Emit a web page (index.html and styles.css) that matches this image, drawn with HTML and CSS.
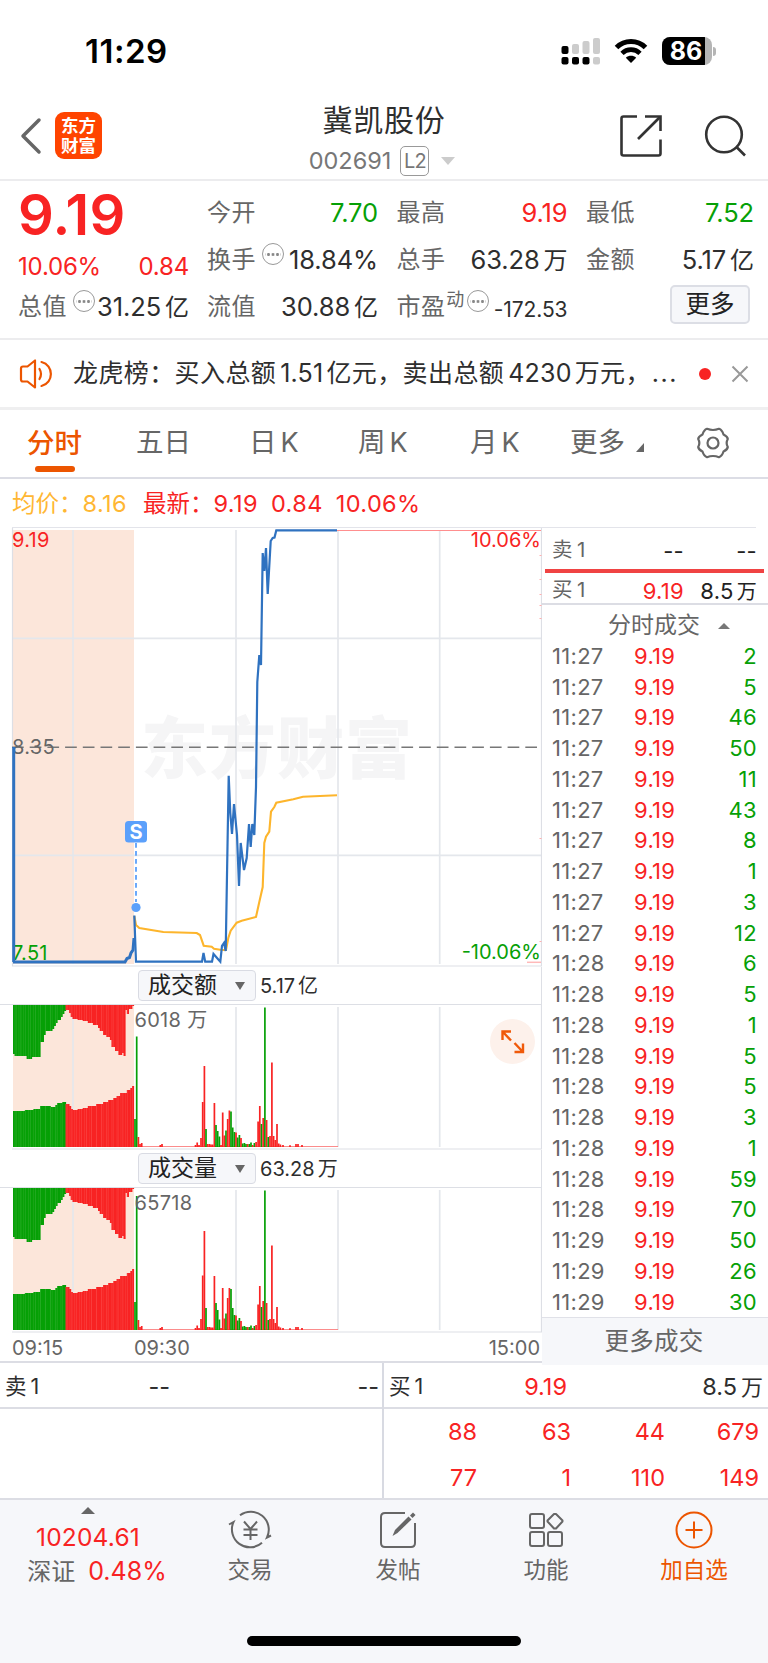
FILE: index.html
```html
<!DOCTYPE html>
<html lang="zh-CN">

<head>
    <meta charset="UTF-8">
    <meta name="viewport" content="width=device-width, initial-scale=1.0">
    <title>冀凯股份 002691</title>
    <link rel="stylesheet" href="styles.css">
</head>

<body>

    <div class="status-bar">
        <span class="clock">11:29</span>
        <svg class="signal" width="40" height="28" viewBox="0 0 40 28">
            <g fill="#000">
                <rect x="0.5" y="9" width="7" height="8" rx="2" />
                <rect x="0.5" y="20" width="7" height="7.5" rx="2" />
                <rect x="11" y="20" width="7" height="7.5" rx="2" />
                <rect x="21.5" y="20" width="7" height="7.5" rx="2" />
            </g>
            <g fill="#ccc">
                <rect x="11" y="7" width="7" height="10" rx="2" />
                <rect x="21.5" y="4" width="7" height="13" rx="2" />
                <rect x="32" y="1" width="7" height="16" rx="2" />
                <rect x="32" y="20" width="7" height="7.5" rx="2" />
            </g>
        </svg>
        <svg class="wifi" width="34" height="26" viewBox="0 0 34 26">
            <path d="M2.5 9.5C10.500 1.500 23.500 1.500 31.500 9.500" fill="none" stroke="#000" stroke-width="5" />
            <path d="M8 15.300C13 10.400 21 10.400 26 15.300" fill="none" stroke="#000" stroke-width="4.600" />
            <path d="M17 25L11.800 19.800C14.700 17.200 19.300 17.200 22.200 19.800Z" fill="#000" />
        </svg>
        <span class="battery"><span class="battery-level">86</span></span>
        <span class="battery-cap"></span>
    </div>

    <header class="header">
        <svg class="back" width="22" height="38" viewBox="0 0 22 38">
            <path d="M19 3L3 19L19 35" fill="none" stroke="#666" stroke-width="3.500" stroke-linecap="round" stroke-linejoin="round" />
        </svg>
        <div class="logo"><span>东方</span><span>财富</span></div>
        <div class="title">
            <h1>冀凯股份</h1>
            <div class="code">002691 <span class="level">L2</span><i class="tri-down"></i></div>
        </div>
        <svg class="share" width="44" height="44" viewBox="0 0 44 44" fill="none" stroke="#333" stroke-width="2.600">
            <path d="M18 2.500H4.500Q2.500 2.500 2.500 4.500V39.500Q2.500 41.500 4.500 41.500H39.500Q41.500 41.500 41.500 39.500V25.500" />
            <path d="M26 2.500H41.500V17" />
            <path d="M41 3L19 25" />
        </svg>
        <svg class="search" width="44" height="44" viewBox="0 0 44 44" fill="none" stroke="#333" stroke-width="2.600">
            <circle cx="20" cy="20.500" r="17.800" />
            <path d="M32 32.500L41 41.500" />
        </svg>
    </header>

    <section class="quote">
        <div class="price">
            <div class="price-now">9.19</div>
            <div class="price-change"><span>10.06%</span><span>0.84</span></div>
            <div class="cell"><span class="label">总值</span><i class="tip"></i><span class="num">31.25<b>亿</b></span></div>
        </div>
        <div class="stats">
            <div class="cell"><span class="label">今开</span><span class="num green">7.70</span></div>
            <div class="cell"><span class="label">最高</span><span class="num red">9.19</span></div>
            <div class="cell"><span class="label">最低</span><span class="num green">7.52</span></div>
            <div class="cell"><span class="label">换手</span><i class="tip"></i><span class="num">18.84%</span></div>
            <div class="cell"><span class="label">总手</span><span class="num">63.28<b>万</b></span></div>
            <div class="cell"><span class="label">金额</span><span class="num">5.17<b>亿</b></span></div>
            <div class="cell"><span class="label">流值</span><span class="num">30.88<b>亿</b></span></div>
            <div class="cell"><span class="label">市盈</span><sup>动</sup><i class="tip"></i><span class="num small">-172.53</span></div>
            <div class="cell"><button class="more-btn">更多</button></div>
        </div>
    </section>

    <section class="notice">
        <svg width="34" height="30" viewBox="0 0 34 30" fill="none" stroke="#ec5500" stroke-width="2.200" stroke-linejoin="round" stroke-linecap="round">
            <path d="M8.500 7.500L16 1.500V28.500L8.500 22.500H4Q2 22.500 2 20.500V9.500Q2 7.500 4 7.500Z" />
            <path d="M20.500 10Q23.500 15 20.500 20" />
            <path d="M22.500 3C35 6 35 24 22.500 27" />
        </svg>
        <p>龙虎榜：买入总额<em>1.51</em>亿元，卖出总额<em>4230</em>万元，<span class="dots">...</span></p>
        <i class="red-dot"></i>
        <svg width="18" height="18" viewBox="0 0 18 18" stroke="#999" stroke-width="2"><path d="M1.500 1.500L16.500 16.500M16.500 1.500L1.500 16.500" /></svg>
    </section>

    <nav class="tabs">
        <span class="tab active">分时</span>
        <span class="tab">五日</span>
        <span class="tab">日<em>K</em></span>
        <span class="tab">周<em>K</em></span>
        <span class="tab">月<em>K</em></span>
        <span class="tab">更多<i class="corner"></i></span>
        <svg class="gear" width="34" height="34" viewBox="0 0 34 34" fill="none" stroke="#666" stroke-width="2.200" stroke-linejoin="round">
            <path d="M11 2.800Q17 5.200 23 2.800Q26 3.800 27.500 8.500Q31.500 10.500 31.800 13Q29.500 17 31.800 21Q31.500 23.500 27.500 25.500Q26 30.200 23 31.200Q17 28.800 11 31.200Q8 30.200 6.500 25.500Q2.500 23.500 2.200 21Q4.500 17 2.200 13Q2.500 10.500 6.500 8.500Q8 3.800 11 2.800Z" />
            <circle cx="17" cy="17" r="5.500" />
        </svg>
    </nav>

    <div class="legend">
        <span class="avg">均价：<em>8.16</em></span>
        <span class="last">最新：<em>9.19</em></span>
        <span class="last"><em>0.84</em></span>
        <span class="last"><em>10.06%</em></span>
    </div>

    <main class="market">
        <div class="charts">
            <!-- price line -->
            <svg class="chart" width="542" height="439" viewBox="0 528 542 439">
                <rect x="13" y="530" width="121" height="434" fill="#fce6da" />
                <text class="watermark" x="141" y="773">东方财富</text>
                <g class="grid">
                    <path d="M73 530V964M236 530V964M338 530V964M439.700 530V964" />
                    <path d="M12 638.300H541M12 855.300H541" />
                    <path class="frame" d="M12.500 527V966H541.500V527" />
                </g>
                <path d="M276 530.500H541" stroke="#ff8f8f" />
                <path d="M527 962.300H541" stroke="#ffb9b9" stroke-width="1.500" />
                <path d="M540.500 555v1M540.500 579v1M540.500 594v1M540.500 605v1M540.500 618v1M540.500 838v1M540.500 941v1" stroke="#ffb0b0" stroke-width="2" />
                <path d="M12 747.300H541" stroke="#777" stroke-width="1.400" stroke-dasharray="11.700 6" />
                <text class="mark red" x="12" y="547">9.19</text>
                <text class="mark" x="12" y="753.500">8.35</text>
                <text class="mark green" x="12" y="959.500">7.51</text>
                <text class="mark red end" x="541" y="547">10.06%</text>
                <text class="mark green end" x="541" y="959">-10.06%</text>
                <polyline id="avg-line" class="avg-line" />
                <path class="auction" d="M13.700 747V962M13 962H125L127 958.500L129.500 957.500L131 953L133 950L134 938" />
                <polyline id="price-line" class="price-line" />
                <path d="M136 843V902" stroke="#5ba0fb" stroke-width="1.800" stroke-dasharray="4.800 3.200" />
                <circle cx="136" cy="907.500" r="4.600" fill="#5ba0fb" />
                <rect x="125" y="821" width="22" height="21.500" rx="3.500" fill="#5ba0fb" />
                <text class="sell" x="136" y="839">S</text>
            </svg>

            <div class="sub-head">
                <span class="picker">成交额<i></i></span><span class="total">5.17<b>亿</b></span>
            </div>
            <svg class="chart" width="542" height="145" viewBox="0 0 542 145">
                <rect x="13" y="0" width="121" height="142" fill="#fce6da" />
                <path class="grid" d="M73 2V142M236 2V142M338 2V142M439.700 2V142" />
                <g id="amount-bars"></g>
                <text class="mark" x="134.500" y="22">6018 万</text>
                <path class="frame" d="M12 144H541.500V0" />
                <circle cx="512.500" cy="36.500" r="22.500" fill="#fdf1eb" />
                <path d="M502.500 35V26.500H511M503 27L511 35.500M523 38.500V47H514.500M522.500 46.500L514.500 38" fill="none" stroke="#f05a0a" stroke-width="2.400" />
            </svg>

            <div class="sub-head">
                <span class="picker">成交量<i></i></span><span class="total">63.28<b>万</b></span>
            </div>
            <svg class="chart" width="542" height="145" viewBox="0 0 542 145">
                <rect x="13" y="0" width="121" height="142" fill="#fce6da" />
                <path class="grid" d="M73 2V142M236 2V142M338 2V142M439.700 2V142" />
                <g id="volume-bars"></g>
                <text class="mark" x="134.500" y="21.500">65718</text>
                <path class="frame" d="M12 144H541.500V0" />
            </svg>
            <div class="times"><span>09:15</span><span>09:30</span><span>15:00</span></div>
        </div>

        <aside class="ticks">
            <div class="order"><span class="label">卖<em>1</em></span><span class="dash">--</span><span class="dash">--</span></div>
            <div class="ratio"></div>
            <div class="order buy"><span class="label">买<em>1</em></span><span class="red">9.19</span><span>8.5<b>万</b></span></div>
            <div class="ticks-title">分时成交<i></i></div>
            <ul id="tick-list" class="tick-list"></ul>
            <div class="ticks-more">更多成交</div>
        </aside>
    </main>

    <section class="queue">
        <div class="side sell-side">
            <div class="best"><span>卖<em>1</em></span><span>--</span><span>--</span></div>
        </div>
        <div class="side">
            <div class="best"><span>买<em>1</em></span><span class="red">9.19</span><span>8.5<b>万</b></span></div>
            <div class="lots">
                <span>88</span><span>63</span><span>44</span><span>679</span>
                <span>77</span><span>1</span><span>110</span><span>149</span>
            </div>
        </div>
    </section>

    <footer class="footer">
        <div class="index">
            <i class="tri-up"></i>
            <div class="index-value">10204.61</div>
            <div class="index-name">深证<em>0.48%</em></div>
        </div>
        <div class="action">
            <svg width="44" height="40" viewBox="0 0 44 40" fill="none" stroke="#666" stroke-width="2">
                <path d="M12 5.300A18 18 0 0 1 39 27.500L43 25.500" />
                <path d="M34 32.700A18 18 0 0 1 5.500 12L1 14.500" />
                <path d="M16 11.500L22.500 19L29 11.500M22.500 19V30M15.500 19.500H29.500M15.500 25H29.500" />
            </svg>
            <span>交易</span>
        </div>
        <div class="action">
            <svg width="40" height="40" viewBox="0 0 40 40" fill="none" stroke="#666" stroke-width="2">
                <path d="M27 3H7Q3 3 3 7V33Q3 37 7 37H33Q37 37 37 33V13" />
                <path d="M14.500 26L17 20L30.500 6.500L33.500 9.500L19.500 23Z" fill="#666" stroke="none" />
                <path d="M32 5.500L35 2.500L37.500 5L34.500 8Z" fill="#666" stroke="none" />
            </svg>
            <span>发帖</span>
        </div>
        <div class="action">
            <svg width="40" height="40" viewBox="0 0 40 40" fill="none" stroke="#666" stroke-width="2">
                <rect x="4" y="4" width="14" height="14" rx="2" />
                <rect x="4" y="22" width="14" height="14" rx="2" />
                <rect x="22" y="22" width="14" height="14" rx="2" />
                <path d="M28 4L30 4L36.500 10.500V11.500L30 18.500H28L21.500 11.500V10.500Z" stroke-linejoin="round" />
            </svg>
            <span>功能</span>
        </div>
        <div class="action add">
            <svg width="40" height="40" viewBox="0 0 40 40" fill="none" stroke="#ec5500" stroke-width="2">
                <circle cx="20" cy="20" r="17.500" />
                <path d="M20 11.500V28.500M11.500 20H28.500" />
            </svg>
            <span>加自选</span>
        </div>
    </footer>
    <div class="home-bar"></div>

    <script src="script.js"></script>
</body>

</html>
```

FILE: styles.css
```css
* {
    box-sizing: border-box;
}

body {
    margin: 0;
    width: 768px;
    height: 1663px;
    overflow: hidden;
    background-color: #fff;
    color: #2e2e2e;
    font-family: Inter, "Noto Sans CJK SC", sans-serif;
    font-size: 24px;
    line-height: 1;
    white-space: nowrap;
}

i,
em,
b {
    font-style: normal;
    font-weight: normal;
}

.red {
    color: #f82323;
}

.green {
    color: #06a006;
}

/* status bar */
.status-bar {
    display: flex;
    align-items: center;
    height: 102px;
    padding-left: 85px;
}

.clock {
    width: 476px;
    padding-top: 1px;
    font-size: 33px;
    font-weight: 600;
    color: #000;
    letter-spacing: 0.5px;
}

.wifi {
    margin-left: 13px;
}

.battery {
    width: 50px;
    height: 28px;
    margin-left: 14px;
    border-radius: 8px;
    background-color: #b5b5b5;
    overflow: hidden;
}

.battery-level {
    display: block;
    width: 43px;
    padding-left: 5px;
    background-color: #000;
    color: #fff;
    font-size: 25px;
    font-weight: 700;
    line-height: 28px;
    text-align: center;
}

.battery-cap {
    width: 3px;
    height: 9px;
    margin-left: 1px;
    border-radius: 0 4px 4px 0;
    background-color: #b5b5b5;
}

/* header */
.header {
    display: flex;
    align-items: center;
    height: 79px;
    padding-left: 20px;
    padding-bottom: 12px;
    border-bottom: 2px solid #ececee;
}

.back {
    margin-top: 2px;
}

.logo {
    display: flex;
    flex-direction: column;
    align-items: center;
    justify-content: center;
    width: 47px;
    height: 47px;
    margin: 2px 0 0 13px;
    border-radius: 9px;
    background-color: #ff4400;
    color: #fff;
    font-size: 17.5px;
    font-weight: 700;
    line-height: 20px;
}

.title {
    width: 300px;
    margin: 8px 0 0 132px;
    text-align: center;
}

h1 {
    margin: 0;
    font-size: 30px;
    font-weight: 400;
    line-height: 36px;
    letter-spacing: 0.8px;
}

.code {
    display: flex;
    align-items: center;
    justify-content: center;
    height: 30px;
    margin-top: 8px;
    padding-right: 4px;
    color: #777;
    font-size: 23.500px;
}

.level {
    width: 29px;
    height: 30px;
    margin: 0 12px 0 9px;
    border: 1.5px solid #999;
    border-radius: 5px;
    font-size: 20px;
    line-height: 28px;
    letter-spacing: -1px;
}

.tri-down {
    border: 7px solid transparent;
    border-top: 8px solid #ccc;
    border-bottom: 0;
}

.share {
    margin: 2px 0 0 85px;
}

.search {
    margin: 2px 0 0 41px;
}

/* quote */
.quote {
    display: flex;
    height: 159px;
    padding: 8px 0 0 18px;
    border-bottom: 2px solid #ececee;
}

.price {
    width: 171px;
    margin-right: 18px;
    color: #f82323;
}

.price-now {
    height: 54px;
    font-size: 56px;
    font-weight: 600;
    line-height: 53px;
    letter-spacing: 0.2px;
}

.price-change {
    display: flex;
    justify-content: space-between;
    align-items: center;
    height: 40px;
    padding-top: 7px;
    letter-spacing: -0.2px;
}

.stats {
    display: grid;
    grid-template-columns: 171px 171px 168px;
    grid-auto-rows: 47px;
    column-gap: 18.500px;
}

.cell {
    display: flex;
    align-items: center;
    height: 47px;
    color: #2e2e2e;
}

.label {
    color: #666;
    font-size: 24px;
    letter-spacing: 0.4px;
}

.num {
    margin-left: auto;
    font-size: 25.5px;
    letter-spacing: -0.1px;
}

.num b {
    margin-left: 4px;
    font-size: 24px;
}

.num.green {
    color: #06a006;
}

.num.red {
    color: #f82323;
}

.num.small {
    font-size: 21px;
    padding-top: 6px;
}

.tip {
    flex: none;
    width: 22px;
    height: 22px;
    margin: 0 -6px 11px 6px;
    border: 1.8px solid #999;
    border-radius: 50%;
    background: radial-gradient(circle, #888 1.2px, transparent 1.7px) center / 4.500px 5px repeat-x content-box;
    padding: 0 2px;
}

sup {
    margin: 0 -3px 14px 1px;
    color: #666;
    font-size: 18px;
    line-height: 1;
}

.more-btn {
    width: 80px;
    height: 39px;
    margin: 0 4px 4px auto;
    padding: 0;
    border: 2px solid #dcdee5;
    border-radius: 5px;
    background-color: #f6f7fa;
    color: #222;
    font: inherit;
    font-size: 24.500px;
}

/* notice */
.notice {
    display: flex;
    align-items: center;
    height: 70px;
    padding-left: 19px;
    border-bottom: 3px solid #efeff0;
}

.notice p {
    width: 604px;
    margin: 0 22px 0 20px;
    font-size: 25px;
    letter-spacing: 0.4px;
}

.notice em {
    margin: 0 3px 0 4px;
    letter-spacing: 0.2px;
}

.dots {
    margin-left: 1px;
    letter-spacing: 1.500px;
}

.red-dot {
    width: 12px;
    height: 12px;
    margin-right: 20px;
    border-radius: 50%;
    background-color: #f82323;
}

/* tabs */
.tabs {
    display: grid;
    grid-template-columns: 109px 113px 109px 112px 100px 126px auto;
    align-items: center;
    height: 69px;
    padding: 0 0 1px 27px;
    border-bottom: 2px solid #dcdde5;
    color: #666;
    font-size: 27.5px;
}

.tab em {
    margin-left: 4px;
    font-size: 27px;
}

.tab.active {
    width: 55px;
    padding-top: 16px;
    color: #ec5500;
    font-weight: 500;
}

.tab.active::after {
    content: "";
    display: block;
    width: 40px;
    height: 6px;
    margin: 9px auto 0;
    border-radius: 3px;
    background-color: #ec5500;
}

.corner {
    display: inline-block;
    margin-left: 11px;
    border-left: 8px solid transparent;
    border-bottom: 9px solid #666;
}

/* legend */
.legend {
    display: flex;
    align-items: center;
    height: 49px;
    margin: 0 12px;
    padding-top: 1px;
    border-bottom: 1px solid #e3e4ea;
    font-size: 23.500px;
}

.legend em {
    letter-spacing: 0.4px;
}

.avg {
    color: #ffb733;
    margin-right: 16px;
}

.last {
    color: #f82323;
    margin-right: 13px;
}

/* charts */
.market {
    display: flex;
    height: 837px;
}

.charts {
    width: 542px;
    height: 835px;
    border-bottom: 2px solid #dcdde4;
}

.chart {
    display: block;
}

.grid,
.frame {
    fill: none;
    stroke: #e4e7ec;
    stroke-width: 1.7;
}

.frame {
    stroke: #dddfe5;
    stroke-width: 1.2;
}

.mark {
    fill: #666;
    font-size: 20px;
    letter-spacing: 0.3px;
}

.mark.red {
    fill: #f82323;
}

.mark.green {
    fill: #06a006;
}

.end {
    letter-spacing: 0;
    text-anchor: end;
}

.watermark {
    fill: #f5f5f6;
    font-size: 67px;
    font-weight: 900;
    letter-spacing: 1px;
}

.sell {
    fill: #fff;
    font-size: 20px;
    font-weight: 700;
    text-anchor: middle;
}

.price-line,
.auction {
    fill: none;
    stroke: #2f72c0;
    stroke-width: 2.2;
}

.auction {
    stroke-width: 3;
}

.avg-line {
    fill: none;
    stroke: #fdb52c;
    stroke-width: 2.1;
}

.sub-head {
    display: flex;
    align-items: center;
    height: 38px;
    padding-left: 138px;
    border-right: 1px solid #dddfe5;
    border-bottom: 1px solid #dddfe5;
    font-size: 20px;
}

.picker {
    display: flex;
    align-items: center;
    justify-content: space-between;
    width: 118px;
    height: 31px;
    margin-right: 4px;
    padding: 0 10px 0 9px;
    border: 1px solid #d9dbe3;
    border-radius: 4px;
    background-color: #f6f7fa;
    color: #222;
    font-size: 23px;
}

.picker i {
    border: 5px solid transparent;
    border-top: 8px solid #666;
    border-bottom: 0;
}

.total b {
    margin-left: 3px;
}

.times {
    display: grid;
    grid-template-columns: 122px 1fr auto;
    align-items: center;
    height: 30px;
    padding: 0 2px 0 12px;
    color: #666;
    font-size: 20px;
}

/* trades */
.ticks {
    width: 226px;
    color: #222;
    letter-spacing: 0.3px;
}

.order {
    display: grid;
    grid-template-columns: 60px 72px 73px;
    align-items: center;
    height: 41px;
    padding: 4px 0 0 10px;
    font-size: 22px;
    text-align: right;
}

.order .label {
    font-size: 20.500px;
    text-align: left;
}

.order em,
.order b,
.best em,
.best b {
    margin-left: 4px;
}

.order b {
    margin-left: 3px;
    font-size: 20px;
}

.order.buy {
    height: 32px;
    padding-top: 5px;
    border-bottom: 2px solid #dcdde4;
}

.ratio {
    height: 4px;
    margin: 0 4px 0 3px;
    background-color: #f04343;
}

.ticks-title {
    display: flex;
    align-items: center;
    justify-content: flex-end;
    height: 35px;
    padding: 6px 38px 0 0;
    color: #666;
    font-size: 23px;
    letter-spacing: 0;
}

.ticks-title i {
    margin-left: 18px;
    border: 6px solid transparent;
    border-bottom: 6px solid #777;
    border-top: 0;
}

.tick-list {
    height: 677px;
    margin: 0;
    padding: 0 11px 0 10px;
    list-style: none;
}

.tick-list li {
    display: grid;
    grid-template-columns: 82px 60px 1fr;
    align-items: center;
    height: 30.760px;
    padding-top: 1px;
    font-size: 22px;
}

.tick-time {
    color: #666;
}

.tick-qty {
    color: #06a006;
    text-align: right;
}

.ticks-more {
    height: 48px;
    border-top: 1px solid #e0e1e8;
    background-color: #f6f7fa;
    color: #666;
    font-size: 24.500px;
    line-height: 47px;
    text-align: center;
    padding-right: 2px;
}

/* order queue */
.queue {
    display: flex;
    height: 133px;
}

.side {
    width: 384px;
    margin-top: -2px;
}

.sell-side {
    border-right: 2px solid #d8dae2;
}

.best {
    display: grid;
    grid-template-columns: 50px 128px 1fr;
    align-items: center;
    height: 46px;
    padding: 4px 5px 0 5px;
    border-bottom: 2px solid #dcdde4;
    font-size: 23.500px;
    text-align: right;
}

.sell-side .best {
    grid-template-columns: 50px 115px 1fr;
    padding-right: 3px;
}

.best span:first-child {
    text-align: left;
    font-size: 21.500px;
}

.best b {
    font-size: 22px;
}

.lots {
    display: grid;
    grid-template-columns: 93px 94px 94px 94px;
    grid-auto-rows: 46px;
    align-items: center;
    color: #f82323;
    font-size: 23.500px;
    text-align: right;
}

/* footer */
.footer {
    display: flex;
    height: 165px;
    border-top: 2px solid #dcdde4;
    background-color: #f6f7fa;
    color: #666;
}

.index {
    width: 176px;
    padding-top: 7px;
    text-align: center;
}

.tri-up {
    display: block;
    width: 14px;
    margin: 0 auto;
    border: 7px solid transparent;
    border-bottom: 7px solid #666;
    border-top: 0;
}

.index-value {
    margin-top: 11px;
    color: #f82323;
    font-size: 24.500px;
    letter-spacing: 0.2px;
}

.index-name {
    margin-top: 9px;
    padding-left: 18px;
}

.index-name em {
    margin-left: 13px;
    color: #f82323;
    font-size: 25px;
}

.action {
    display: flex;
    flex-direction: column;
    align-items: center;
    width: 148px;
    padding-top: 10px;
    font-size: 22.500px;
}

.action span {
    margin-top: 9px;
}

.add {
    color: #ec5500;
}

.home-bar {
    position: absolute;
    left: 247px;
    top: 1636px;
    width: 274px;
    height: 10px;
    border-radius: 5px;
    background-color: #000;
}
```

FILE: script.js
```js
const RED = '#f82323';
const GREEN = '#06a006';
const BASE = 142;

const priceLine = [
    [134.3, 915.500], [136, 961.700], [202, 961.700], [203.500, 953], [205.200, 961.700], [212, 961.700],
    [213.500, 954], [220.300, 961.700], [222, 946], [224, 943], [225.700, 951], [228.700, 775.700],
    [230.300, 813], [232, 834], [234, 804], [237, 835], [239, 886], [240.700, 843], [244, 870],
    [246.700, 858], [249, 824], [250.700, 847], [252.300, 824], [254.300, 835], [256, 787],
    [257.300, 682], [259.300, 655], [261, 665], [262.700, 553], [264.300, 571], [266, 548],
    [267.700, 594], [270.700, 541], [272.700, 538], [274.500, 537.500], [276.300, 530.300], [337, 530.300]
];

const avgLine = [
    [134.300, 916], [136, 925], [139.300, 928], [163.300, 932], [196.700, 933], [200, 935],
    [203.700, 945.700], [211.700, 946.700], [214, 948.700], [221.700, 950], [226, 950],
    [228.300, 938], [230.700, 930.700], [236.700, 922.700], [241.700, 920.700], [256, 917],
    [259.300, 902], [262.700, 887], [264.300, 843], [266, 836.700], [269.300, 831.700],
    [271, 811.700], [274.300, 807], [276.300, 802.700], [293.300, 799.300], [303, 796.700], [337, 795.300]
];

// call auction: [x, height] of the unmatched part (top) and matched part (bottom)
const auctionTop = [
    [13, 49], [15, 51], [26, 54], [31, 52], [40, 37], [44, 30], [45, 26], [51, 24], [53, 21],
    [55, 18], [57, 15], [60, 12], [62, 9], [64, 6], [66, 5], [68, 8], [70, 12], [72, 14], [77, 15],
    [82, 16], [88, 18], [93, 20], [97, 23], [100, 26], [103, 30], [107, 32], [110, 35], [112, 42],
    [115, 46], [118, 50], [121, 48], [123, 51], [124.500, 54], [125.500, 5], [127, 9], [129, 4],
    [131, 5], [132.500, 1]
];
const auctionBottom = [
    [13, 36], [25, 37], [33, 38], [40, 41], [50, 40], [55, 42], [57, 44], [62, 45], [65, 46],
    [66, 43], [68, 41], [70, 38], [73, 37], [77, 38], [82, 39], [88, 41], [96, 43], [103, 45],
    [108, 47], [113, 49], [117, 51], [120, 54], [126, 57], [130, 59], [132, 61]
];

// continuous trading: [x, height, colour]
const amount = [
    [135, 28, 'g'], [136.700, 110.500, 'g'], [138.400, 10, 'r'], [140, 3, 'r'], [141.700, 4, 'r'],
    [160.300, 2, 'r'], [162, 3, 'r'], [195.500, 2, 'r'], [197.200, 4.500, 'r'], [199, 2, 'r'],
    [201, 9, 'r'], [202.700, 45, 'r'], [204.400, 81, 'r'], [206, 18, 'g'], [207.700, 3, 'r'],
    [209.400, 3, 'r'], [211, 2.500, 'r'], [212.700, 2.500, 'r'], [214.400, 44, 'r'], [216, 22, 'g'],
    [217.700, 16, 'g'], [219.400, 10.500, 'g'], [221, 2, 'r'], [222.700, 34.500, 'r'], [224.400, 11.500, 'r'],
    [226, 16.500, 'g'], [227.700, 28, 'r'], [229.400, 36.500, 'r'], [231, 35.500, 'g'], [232.700, 19.500, 'g'],
    [234.400, 15, 'g'], [236, 14.500, 'r'], [237.700, 9.500, 'g'], [239.400, 12, 'g'], [241, 9, 'r'],
    [242.700, 3.500, 'g'], [244.400, 4, 'g'], [246, 3, 'g'], [247.700, 3, 'r'], [249.400, 3, 'g'],
    [251, 4.500, 'g'], [252.700, 2, 'r'], [254.400, 4, 'g'], [256.100, 5, 'r'], [258.100, 25.500, 'r'],
    [259.800, 41, 'r'], [261.500, 23, 'g'], [263.200, 29, 'r'], [264.900, 139.500, 'g'], [266.600, 27, 'r'],
    [268.300, 10, 'g'], [270, 11, 'r'], [271.900, 84.500, 'r'], [273.600, 11, 'r'], [275.300, 7, 'r'],
    [277, 23, 'r'], [278.700, 3.500, 'r'], [280.400, 2.500, 'r'], [283, 2, 'r'], [290, 1.800, 'r'],
    [296, 3, 'r'], [298, 3, 'r'], [302, 2, 'r']
];

// shares traded differ from turnover at the cheap prices before the rally
const volumeChanges = {
    136.7: 134, 202.7: 54.500, 204.4: 99, 214.4: 54, 216: 27, 217.7: 20, 222.7: 42,
    227.7: 32, 229.4: 42, 231: 41, 232.7: 22, 259.8: 44, 206: 22, 201: 11
};

const ticks = [
    ['11:27', 2], ['11:27', 5], ['11:27', 46], ['11:27', 50], ['11:27', 11], ['11:27', 43],
    ['11:27', 8], ['11:27', 1], ['11:27', 3], ['11:27', 12], ['11:28', 6], ['11:28', 5],
    ['11:28', 1], ['11:28', 5], ['11:28', 5], ['11:28', 3], ['11:28', 1], ['11:28', 59],
    ['11:28', 70], ['11:29', 50], ['11:29', 26], ['11:29', 30]
];

function rect(x, y, width, height, fill) {
    return `<rect x="${x}" y="${y}" width="${width}" height="${height}" fill="${fill}" />`;
}

function heightAt(steps, x) {
    let height = steps[0][1];
    steps.forEach(step => {
        if (x >= step[0]) height = step[1];
    });
    return height;
}

function drawBars(id, bars) {
    let html = '';
    for (let i = 0; i < 71; i++) {
        const x = 13 + i * 1.7;
        const green = x < 65.500;
        const top = heightAt(auctionTop, x + 0.5);
        const bottom = heightAt(auctionBottom, x + 0.5);
        const width = 2.1;
        html += rect(x, 0, width, top, green ? GREEN : RED);
        html += rect(x, BASE - bottom, width, bottom, green ? GREEN : RED);
        if (i % 3 === 1) {
            const seam = green ? '#28ad28' : '#fa4343';
            html += rect(x, 0, 0.7, top, seam);
            html += rect(x, BASE - bottom, 0.7, bottom, seam);
        }
    }
    html += rect(138, BASE - 0.8, 200, 0.8, '#fa7070');
    bars.forEach(([x, height, color]) => {
        html += rect(x - 0.85, BASE - height, 1.7, height, color === 'g' ? GREEN : RED);
    });
    document.getElementById(id).innerHTML = html;
}

document.getElementById('price-line').setAttribute('points', priceLine.join(' '));
document.getElementById('avg-line').setAttribute('points', avgLine.join(' '));
drawBars('amount-bars', amount);
drawBars('volume-bars', amount.map(([x, h, c]) => [x, volumeChanges[x] || h, c]));

document.getElementById('tick-list').innerHTML = ticks.map(([time, qty]) =>
    `<li><span class="tick-time">${time}</span><span class="red">9.19</span><span class="tick-qty">${qty}</span></li>`
).join('');
```
